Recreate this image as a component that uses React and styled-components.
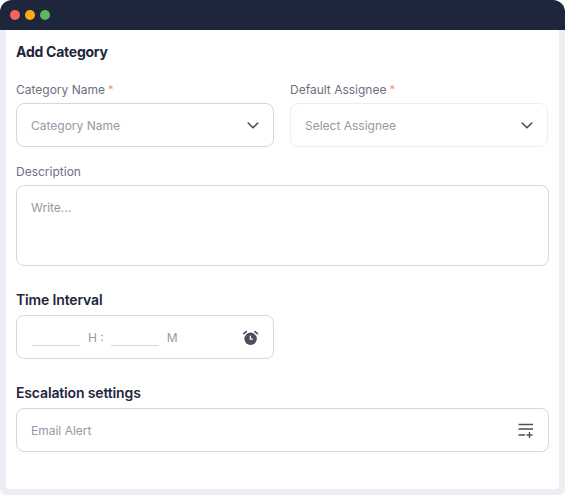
import React from "react";
import styled, { createGlobalStyle } from "styled-components";

const Global = createGlobalStyle`
  html, body { margin: 0; padding: 0; background: #fff; }
  body { font-family: Inter, "Noto Sans", sans-serif; }
`;

const Frame = styled.div`
  width: 565px;
  height: 495px;
  box-sizing: border-box;
  display: flex;
  flex-direction: column;
  background: #eceef3;
  border-radius: 12px 12px 6px 6px;
  overflow: hidden;
`;

const TitleBar = styled.div`
  height: 30px;
  flex: none;
  background: #1e263c;
  display: flex;
  align-items: center;
  gap: 5px;
  padding: 0 0 0 10px;
`;

const Dot = styled.span`
  width: 10px;
  height: 10px;
  border-radius: 50%;
  background: ${(p) => p.$color};
`;

const Panel = styled.div`
  flex: none;
  height: 459px;
  margin: 0 6px;
  box-sizing: border-box;
  background: #fff;
  border-radius: 0 0 4px 4px;
  padding: 14px 10px 0;
  display: flex;
  flex-direction: column;
`;

const Heading = styled.h1`
  margin: 0;
  font-size: 14px;
  line-height: 16px;
  font-weight: 700;
  letter-spacing: -0.25px;
  color: #1e263c;
`;

const Row = styled.div`
  display: grid;
  grid-template-columns: 258px 258px;
  column-gap: 16px;
  margin-top: 20px;
`;

const Field = styled.div`
  display: flex;
  flex-direction: column;
  margin-top: ${(p) => p.$top || 0}px;
`;

const Label = styled.label`
  padding-top: 1px;
  font-size: 12px;
  line-height: 16px;
  font-weight: 400;
  color: #6c7080;
  margin-bottom: 5px;
`;

const Star = styled.span`
  color: #f28b8b;
  margin-left: 3px;
  font-size: 11px;
  vertical-align: 1px;
`;

const Section = styled.h2`
  margin: 0 0 7px;
  padding-top: 1px;
  font-size: 14px;
  line-height: 16px;
  font-weight: 600;
  letter-spacing: -0.15px;
  color: #1e263c;
`;

const Box = styled.div`
  box-sizing: border-box;
  height: ${(p) => p.$height || 44}px;
  width: ${(p) => p.$width || "100%"};
  border: 1px solid ${(p) => p.$border || "#d5d7dd"};
  border-radius: 8px;
  display: flex;
  align-items: ${(p) => (p.$top ? "flex-start" : "center")};
  justify-content: space-between;
  padding: ${(p) => (p.$top ? "13px 14px" : "0 14px")};
`;

const Placeholder = styled.span`
  padding-top: 1px;
  font-size: 12px;
  line-height: 16px;
  color: #9599a6;
`;

const IconSlot = styled.span`
  display: flex;
  padding-top: 1px;
`;

const TimeGroup = styled.div`
  display: flex;
  align-items: center;
`;

const Blank = styled.span`
  width: 48px;
  height: 16px;
  border-bottom: 1px solid #d5d7dd;
  margin-left: ${(p) => p.$left || 0}px;
`;

const Unit = styled.span`
  padding-top: 1px;
  font-size: 12px;
  line-height: 16px;
  color: #9599a6;
  margin-left: ${(p) => p.$left || 0}px;
`;

const Chevron = () => (
  <svg width="12" height="8" viewBox="0 0 12 8" fill="none">
    <path d="M1.2 1 6 5.8 10.8 1" stroke="#4b4f5e" strokeWidth="1.6" strokeLinecap="round" strokeLinejoin="round" />
  </svg>
);

const Alarm = () => (
  <svg width="16" height="16" viewBox="0 0 16 16">
    <circle cx="7.6" cy="8.8" r="6.2" fill="#4b4f5e" />
    <path d="M0.8 3.6 3.2 1.6M14.4 3.6 12 1.6" stroke="#4b4f5e" strokeWidth="1.7" strokeLinecap="round" />
    <path d="M7.4 5.8v3.4h2.4" stroke="#fff" strokeWidth="1.2" fill="none" />
  </svg>
);

const ListAdd = () => (
  <svg width="16" height="16" viewBox="0 0 16 16" fill="none">
    <path d="M0.5 1.5h14.5M0.5 6h14.5M0.5 12h6.5M8.5 12h6M11.5 9v6" stroke="#4b4f5e" strokeWidth="1.4" />
  </svg>
);

export default function App() {
  return (
    <>
      <Global />
      <Frame>
        <TitleBar>
          <Dot $color="#f76363" />
          <Dot $color="#fdab12" />
          <Dot $color="#5cb85f" />
        </TitleBar>
        <Panel>
          <Heading>Add Category</Heading>
          <Row>
            <Field>
              <Label>Category Name<Star>*</Star></Label>
              <Box>
                <Placeholder>Category Name</Placeholder>
                <IconSlot><Chevron /></IconSlot>
              </Box>
            </Field>
            <Field>
              <Label>Default Assignee<Star>*</Star></Label>
              <Box $border="#eceef1">
                <Placeholder>Select Assignee</Placeholder>
                <IconSlot><Chevron /></IconSlot>
              </Box>
            </Field>
          </Row>
          <Field $top={16}>
            <Label>Description</Label>
            <Box $height={81} $top>
              <Placeholder>Write...</Placeholder>
            </Box>
          </Field>
          <Field $top={25}>
            <Section>Time Interval</Section>
            <Box $width="258px">
              <TimeGroup>
                <Blank $left={1} />
                <Unit $left={8}>H :</Unit>
                <Blank $left={7} />
                <Unit $left={8}>M</Unit>
              </TimeGroup>
              <IconSlot><Alarm /></IconSlot>
            </Box>
          </Field>
          <Field $top={25}>
            <Section>Escalation settings</Section>
            <Box>
              <Placeholder>Email Alert</Placeholder>
              <IconSlot><ListAdd /></IconSlot>
            </Box>
          </Field>
        </Panel>
      </Frame>
    </>
  );
}
